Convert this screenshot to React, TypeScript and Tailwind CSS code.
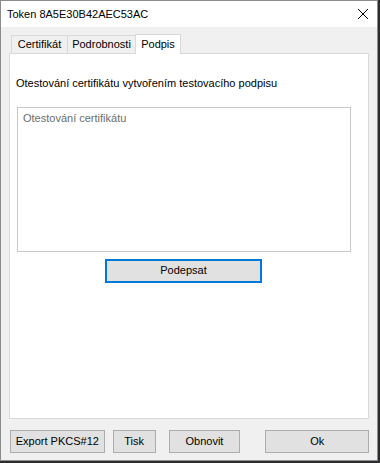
const font = { fontFamily: '"Liberation Sans", Arial, sans-serif' };

function Tab({ label, active, w }: { label: string; active?: boolean; w: string }) {
  return (
    <div
      className={
        active
          ? `relative z-10 -mb-px flex h-[20px] items-center justify-center border border-b-0 border-[#d9d9d9] bg-white text-[11px] text-black ${w}`
          : `mt-[2px] flex h-[18px] items-center justify-center border border-b-0 border-[#d9d9d9] bg-[#f0f0f0] text-[11px] text-black ${w}`
      }
    >
      {label}
    </div>
  );
}

function Btn({ label, w, className }: { label: string; w: string; className?: string }) {
  return (
    <button
      className={`flex h-[23px] items-center justify-center border border-[#adadad] bg-[#e1e1e1] text-[11px] text-black ${w} ${className ?? ""}`}
    >
      {label}
    </button>
  );
}

export default function App() {
  return (
    <div className="h-[463px] w-[380px] bg-[#2d2d30]" style={font}>
      <div className="flex h-[461px] w-[378px] flex-col border border-[#8c8c8c] bg-[#f0f0f0]">
        <div className="flex h-[26px] shrink-0 items-center justify-between bg-white pl-[6px] pr-[7px]">
          <span className="text-[11px] text-black">Token 8A5E30B42AEC53AC</span>
          <svg width="12" height="12" viewBox="0 0 12 12" className="mr-[1px]">
            <path d="M1 1 L11 11 M11 1 L1 11" stroke="#000" strokeWidth="1" />
          </svg>
        </div>

        <div className="flex flex-1 flex-col px-[8px] pt-[6px]">
          <div className="flex items-end pl-[2px]">
            <Tab label="Certifikát" w="w-[57px]" />
            <div className="-ml-px"><Tab label="Podrobnosti" w="w-[69px]" /></div>
            <div className="-ml-px"><Tab label="Podpis" w="w-[46px]" active /></div>
          </div>
          <div className="flex h-[366px] flex-col border border-[#d9d9d9] bg-white px-[6px]">
            <div className="mt-[21px] text-[11px] text-black">
              Otestování certifikátu vytvořením testovacího podpisu
            </div>
            <div className="ml-px mt-[15px] h-[145px] w-[334px] border border-[#c8c8c8] bg-white px-[5px] pt-[2px] text-[11px] text-[#6d6d6d]">
              Otestování certifikátu
            </div>
            <div className="ml-[89px] mt-[7px] flex h-[24px] w-[157px] items-center justify-center border-2 border-[#0078d7] bg-[#e1e1e1] text-[11px] text-black">
              Podepsat
            </div>
          </div>

          <div className="mt-[11px] flex items-center pl-px">
            <Btn label="Export PKCS#12" w="w-[95px]" />
            <Btn label="Tisk" w="w-[43px]" className="ml-[8px]" />
            <Btn label="Obnovit" w="w-[72px]" className="ml-[13px]" />
            <Btn label="Ok" w="w-[104px]" className="ml-[25px]" />
          </div>
        </div>
      </div>
    </div>
  );
}
